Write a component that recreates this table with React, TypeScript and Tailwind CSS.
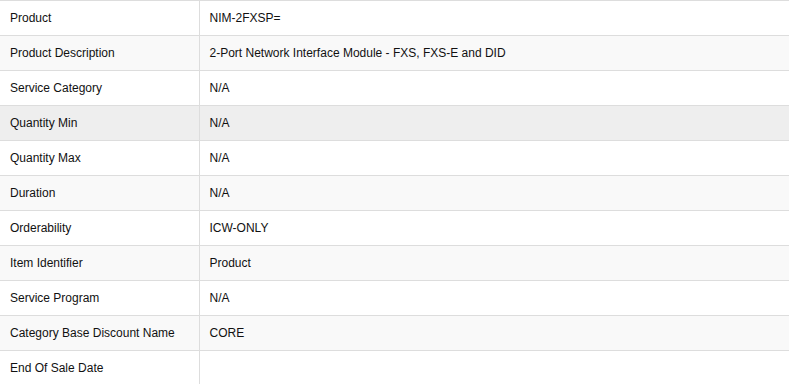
const rows: [string, string][] = [
  ["Product", "NIM-2FXSP="],
  ["Product Description", "2-Port Network Interface Module - FXS, FXS-E and DID"],
  ["Service Category", "N/A"],
  ["Quantity Min", "N/A"],
  ["Quantity Max", "N/A"],
  ["Duration", "N/A"],
  ["Orderability", "ICW-ONLY"],
  ["Item Identifier", "Product"],
  ["Service Program", "N/A"],
  ["Category Base Discount Name", "CORE"],
  ["End Of Sale Date", ""],
]

export default function App() {
  return (
    <div className="w-[789px] h-[384px] overflow-hidden bg-white font-['Liberation_Sans',Arial,sans-serif] text-[12px] text-[#111111]">
      <table className="w-full border-collapse">
        <tbody>
          {rows.map(([label, value], i) => {
            const last = i === rows.length - 1
            const rowBg = i === 3 ? "bg-[#eeeeee]" : i % 2 === 1 ? "bg-[#f9f9f9]" : "bg-white"
            return (
              <tr key={label} className={rowBg}>
                <td className="w-[199px] border-t border-[#dddddd] px-[10px] py-[9px] leading-[16px] align-middle">
                  {label}
                </td>
                <td
                  className={`border-t border-l border-[#dddddd] px-[10px] py-[9px] leading-[16px] align-middle ${
                    last ? "bg-white" : ""
                  }`}
                >
                  {value}
                </td>
              </tr>
            )
          })}
        </tbody>
      </table>
    </div>
  )
}
